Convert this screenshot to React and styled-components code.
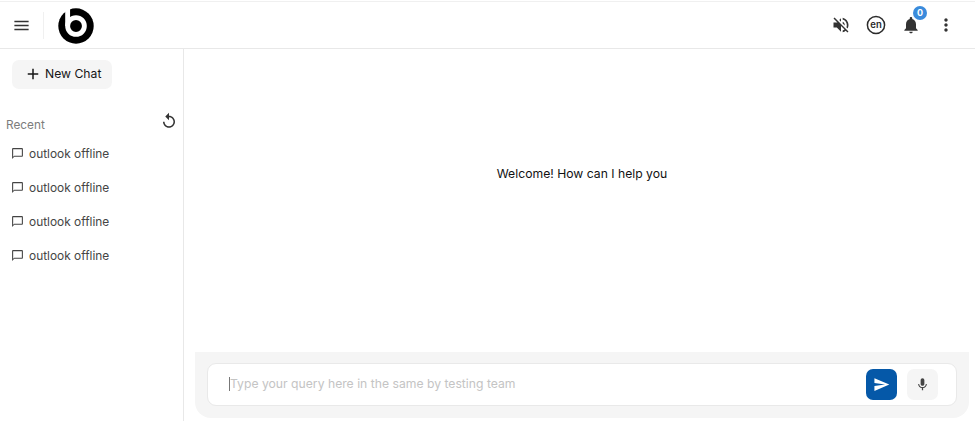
import React from "react";
import styled, { createGlobalStyle } from "styled-components";

const GlobalStyle = createGlobalStyle`
  html, body {
    margin: 0;
    padding: 0;
    height: 421px;
    overflow: hidden;
    background: #fff;
    font-family: "Inter", "Open Sans", sans-serif;
  }
  * { box-sizing: border-box; }
`;

const Page = styled.div`
  display: flex;
  flex-direction: column;
  height: 421px;
  width: 975px;
  padding-top: 1px;
`;

const Header = styled.header`
  display: flex;
  align-items: center;
  height: 48px;
  flex-shrink: 0;
  padding: 0 18px 0 12px;
  border-top: 1px solid #f0f0f0;
  border-bottom: 1px solid #e8e8e8;
`;

const Divider = styled.div`
  width: 1px;
  height: 27px;
  margin: 0 14px 0 12px;
  background: #f0f0f0;
`;

const LogoMark = styled.svg`
  width: 36px;
  height: 36px;
  margin-top: 2px;
`;

const HeaderActions = styled.div`
  display: flex;
  align-items: center;
  gap: 13px;
  margin-left: auto;
`;

const IconSlot = styled.div`
  position: relative;
  display: flex;
  align-items: center;
  justify-content: center;
  width: 22px;
  height: 22px;
`;

const Badge = styled.span`
  position: absolute;
  top: -8px;
  right: -5px;
  width: 14px;
  height: 14px;
  border-radius: 50%;
  background: #3a8bdc;
  color: #fff;
  font-size: 9px;
  font-weight: 700;
  line-height: 14px;
  text-align: center;
`;

const Body = styled.div`
  display: flex;
  flex: 1;
  min-height: 0;
`;

const Sidebar = styled.aside`
  width: 184px;
  flex-shrink: 0;
  border-right: 1px solid #e8e8e8;
  padding: 11px 0 0;
`;

const NewChatButton = styled.button`
  display: flex;
  align-items: center;
  gap: 3px;
  width: 100px;
  height: 29px;
  margin-left: 12px;
  padding: 0 0 3px 12px;
  border: 0;
  border-radius: 7px;
  background: #f5f5f5;
  color: #161616;
  font: 400 12.2px "Inter", sans-serif;

  svg {
    margin-top: 1px;
  }
`;

const RecentRow = styled.div`
  display: flex;
  align-items: center;
  justify-content: space-between;
  height: 22px;
  margin-top: 21px;
  padding: 0 5px 0 6px;
`;

const RecentLabel = styled.span`
  padding-top: 8px;
  color: #7c7c7c;
  font-size: 11.8px;
`;

const HistoryList = styled.ul`
  list-style: none;
  margin: 4px 0 0;
  padding: 0;
`;

const HistoryItem = styled.li`
  display: flex;
  align-items: center;
  gap: 5px;
  height: 34px;
  padding-left: 11px;
  color: #454545;
  font-size: 11.9px;
`;

const Main = styled.main`
  display: flex;
  flex: 1;
  flex-direction: column;
  min-width: 0;
  padding: 0 6px 3px 11px;
`;

const Welcome = styled.div`
  flex: 1;
  padding: 117px 0 0 0;
  color: #111;
  font-size: 12.2px;
  font-weight: 400;
  text-align: center;
`;

const Composer = styled.div`
  height: 66px;
  padding: 11px 12px 12px 12px;
  background: #f5f5f5;
  border-radius: 0 0 16px 16px;
`;

const InputCard = styled.div`
  display: flex;
  align-items: center;
  height: 43px;
  padding: 0 18px 0 21px;
  border: 1px solid #e9e9e9;
  border-radius: 9px;
  background: #fff;
`;

const QueryInput = styled.input`
  flex: 1;
  min-width: 0;
  border: 0;
  outline: 0;
  padding: 0;
  border-left: 1px solid #777;
  height: 14px;
  margin-bottom: 2px;
  background: transparent;
  font: 400 12.2px "Inter", sans-serif;

  &::placeholder {
    color: #c4c4c4;
    opacity: 1;
  }
`;

const RoundButton = styled.button`
  display: flex;
  align-items: center;
  justify-content: center;
  width: 31px;
  height: 31px;
  margin-left: ${props => props.$gap || 0}px;
  padding: 0;
  border: 0;
  border-radius: 7px;
  background: ${props => (props.$primary ? "#0558a8" : "#f5f5f5")};
`;

const Icon = ({ d, size = 24, color = "#333" }) => (
  <svg width={size} height={size} viewBox="0 0 24 24" fill={color}>
    <path d={d} />
  </svg>
);

const Logo = () => (
  <LogoMark viewBox="0 0 37 37">
    <circle cx="18.5" cy="18.5" r="18.2" fill="#000" />
    <circle cx="18.5" cy="18.5" r="8.6" fill="none" stroke="#fff" strokeWidth="5" />
    <rect x="7.4" y="0" width="5" height="18.5" fill="#fff" />
    <circle cx="18.5" cy="18.5" r="4.6" fill="#000" />
  </LogoMark>
);

const LangIcon = () => (
  <svg width="20" height="20" viewBox="0 0 20 20">
    <circle cx="10" cy="10" r="8.6" fill="none" stroke="#2b2b2b" strokeWidth="1.5" />
    <text x="10" y="13.2" textAnchor="middle" fontSize="9.5" fontWeight="600" fill="#2b2b2b" fontFamily="Inter, sans-serif">en</text>
  </svg>
);

const paths = {
  menu: "M3 18h18v-2H3v2zm0-5h18v-2H3v2zm0-7v2h18V6H3z",
  mute: "M16.5 12c0-1.77-1.02-3.29-2.5-4.03v2.21l2.45 2.45c.03-.2.05-.41.05-.63zm2.5 0c0 .94-.2 1.82-.54 2.64l1.51 1.51C20.63 14.91 21 13.5 21 12c0-4.28-2.99-7.86-7-8.77v2.06c2.89.86 5 3.54 5 6.71zM4.27 3L3 4.27 7.73 9H3v6h4l5 5v-6.73l4.25 4.25c-.67.52-1.42.93-2.25 1.18v2.06c1.38-.31 2.63-.95 3.69-1.81L19.73 21 21 19.73l-9-9L4.27 3zM12 4L9.91 6.09 12 8.18V4z",
  bell: "M12 22c1.1 0 2-.9 2-2h-4c0 1.1.89 2 2 2zm6-6v-5c0-3.07-1.64-5.64-4.5-6.32V4c0-.83-.67-1.5-1.5-1.5s-1.5.67-1.5 1.5v.68C7.63 5.36 6 7.92 6 11v5l-2 2v1h16v-1l-2-2z",
  more: "M12 8c1.1 0 2-.9 2-2s-.9-2-2-2-2 .9-2 2 .9 2 2 2zm0 2c-1.1 0-2 .9-2 2s.9 2 2 2 2-.9 2-2-.9-2-2-2zm0 6c-1.1 0-2 .9-2 2s.9 2 2 2 2-.9 2-2-.9-2-2-2z",
  add: "M19 13h-6v6h-2v-6H5v-2h6V5h2v6h6v2z",
  replay: "M12 5V1L7 6l5 5V7c3.31 0 6 2.69 6 6s-2.69 6-6 6-6-2.69-6-6H4c0 4.42 3.58 8 8 8s8-3.58 8-8-3.58-8-8-8z",
  chat: "M20 2H4c-1.1 0-2 .9-2 2v18l4-4h14c1.1 0 2-.9 2-2V4c0-1.1-.9-2-2-2zm0 14H6l-2 2V4h16v12z",
  send: "M2.01 21L23 12 2.01 3 2 10l15 2-15 2z",
  mic: "M12 14c1.66 0 2.99-1.34 2.99-3L15 5c0-1.66-1.34-3-3-3S9 3.34 9 5v6c0 1.66 1.34 3 3 3zm5.3-3c0 3-2.54 5.1-5.3 5.1S6.7 14 6.7 11H5c0 3.41 2.72 6.23 6 6.72V21h2v-3.28c3.28-.48 6-3.3 6-6.72h-1.7z"
};

const history = ["outlook offline", "outlook offline", "outlook offline", "outlook offline"];

const App = () => (
  <Page>
    <GlobalStyle />
    <Header>
      <Icon d={paths.menu} size={19} color="#333" />
      <Divider />
      <Logo />
      <HeaderActions>
        <IconSlot><Icon d={paths.mute} size={20} color="#333" /></IconSlot>
        <IconSlot><LangIcon /></IconSlot>
        <IconSlot>
          <Icon d={paths.bell} size={20} color="#333" />
          <Badge>0</Badge>
        </IconSlot>
        <IconSlot><Icon d={paths.more} size={20} color="#333" /></IconSlot>
      </HeaderActions>
    </Header>
    <Body>
      <Sidebar>
        <NewChatButton>
          <Icon d={paths.add} size={18} color="#161616" />
          New Chat
        </NewChatButton>
        <RecentRow>
          <RecentLabel>Recent</RecentLabel>
          <Icon d={paths.replay} size={18} color="#333" />
        </RecentRow>
        <HistoryList>
          {history.map((title, i) => (
            <HistoryItem key={i}>
              <Icon d={paths.chat} size={13} color="#444" />
              {title}
            </HistoryItem>
          ))}
        </HistoryList>
      </Sidebar>
      <Main>
        <Welcome>Welcome! How can I help you</Welcome>
        <Composer>
          <InputCard>
            <QueryInput placeholder="Type your query here in the same by testing team" />
            <RoundButton $primary>
              <Icon d={paths.send} size={17} color="#fff" />
            </RoundButton>
            <RoundButton $gap={10}>
              <Icon d={paths.mic} size={15} color="#444" />
            </RoundButton>
          </InputCard>
        </Composer>
      </Main>
    </Body>
  </Page>
);

export default App;
